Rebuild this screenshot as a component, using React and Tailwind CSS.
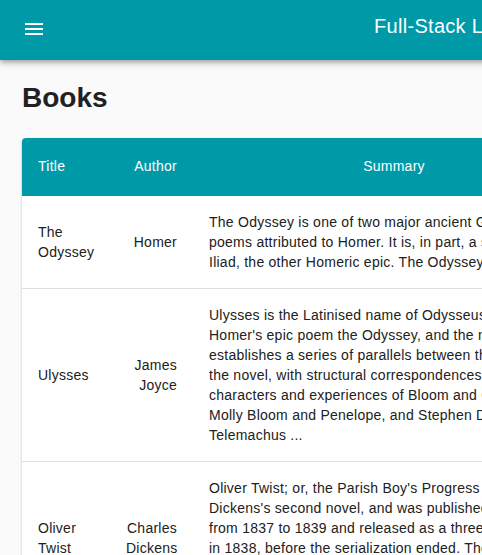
import React from 'react';

const books = [
  {
    id: 1,
    title: 'The Odyssey',
    author: 'Homer',
    summary:
      'The Odyssey is one of two major ancient Greek epic poems attributed to Homer. It is, in part, a sequel to the Iliad, the other Homeric epic. The Odyssey ...',
  },
  {
    id: 2,
    title: 'Ulysses',
    author: 'James Joyce',
    summary:
      "Ulysses is the Latinised name of Odysseus, the hero of Homer's epic poem the Odyssey, and the novel establishes a series of parallels between the poem and the novel, with structural correspondences between the characters and experiences of Bloom and Odysseus, Molly Bloom and Penelope, and Stephen Dedalus and Telemachus ...",
  },
  {
    id: 3,
    title: 'Oliver Twist',
    author: 'Charles Dickens',
    summary:
      "Oliver Twist; or, the Parish Boy's Progress is Charles Dickens's second novel, and was published as a serial from 1837 to 1839 and released as a three-volume book in 1838, before the serialization ended. The story centres on orphan Oliver Twist, born in a workhouse and sold into apprenticeship ...",
  },
];

function MenuIcon() {
  return (
    <svg width="24" height="24" viewBox="0 0 24 24" fill="white">
      <path d="M3 18h18v-2H3v2zm0-5h18v-2H3v2zm0-7v2h18V6H3z" />
    </svg>
  );
}

export default function App() {
  return (
    <div
      className="w-screen h-screen overflow-hidden bg-[#fafafa] text-[#212121]"
      style={{ fontFamily: '"Liberation Sans", Arial, sans-serif' }}
    >
      <div className="w-[720px]">
        {/* App bar */}
        <header className="h-[60px] bg-[#0099a8] flex items-start shadow-[0_2px_4px_-1px_rgba(0,0,0,0.2),0_4px_5px_0_rgba(0,0,0,0.14),0_1px_10px_0_rgba(0,0,0,0.12)] relative z-10">
          <button className="ml-[22px] mt-[17px]">
            <MenuIcon />
          </button>
          <h1 className="ml-[328px] mt-[15px] text-[20px] leading-[23px] tracking-[0.3px] text-white whitespace-nowrap">
            Full-Stack Library
          </h1>
        </header>

        {/* Content */}
        <main className="px-[22px] pt-[22px]">
          <h2 className="text-[28px] leading-[32px] font-bold mb-[24px]">Books</h2>

          <div className="w-[573px] bg-white rounded shadow-[0_1px_3px_0_rgba(0,0,0,0.2),0_1px_1px_0_rgba(0,0,0,0.14),0_2px_1px_-1px_rgba(0,0,0,0.12)] overflow-hidden">
            <table className="w-full table-fixed border-collapse text-[14px] leading-[20px] tracking-[0.25px]">
              <colgroup>
                <col className="w-[88px]" />
                <col className="w-[83px]" />
                <col className="w-[402px]" />
              </colgroup>
              <thead className="bg-[#0099a8] text-white">
                <tr className="h-[57px] border-b border-[#0099a8]">
                  <th className="px-4 text-left font-normal">Title</th>
                  <th className="px-4 text-right font-normal">Author</th>
                  <th className="px-4 text-center font-normal">Summary</th>
                </tr>
              </thead>
              <tbody>
                {books.map((book) => (
                  <tr key={book.id} className="border-b border-[#e0e0e0]">
                    <td className="p-4 align-middle">{book.title}</td>
                    <td className="p-4 align-middle text-right">{book.author}</td>
                    <td className="p-4 align-middle">{book.summary}</td>
                  </tr>
                ))}
              </tbody>
            </table>
          </div>
        </main>
      </div>
    </div>
  );
}
